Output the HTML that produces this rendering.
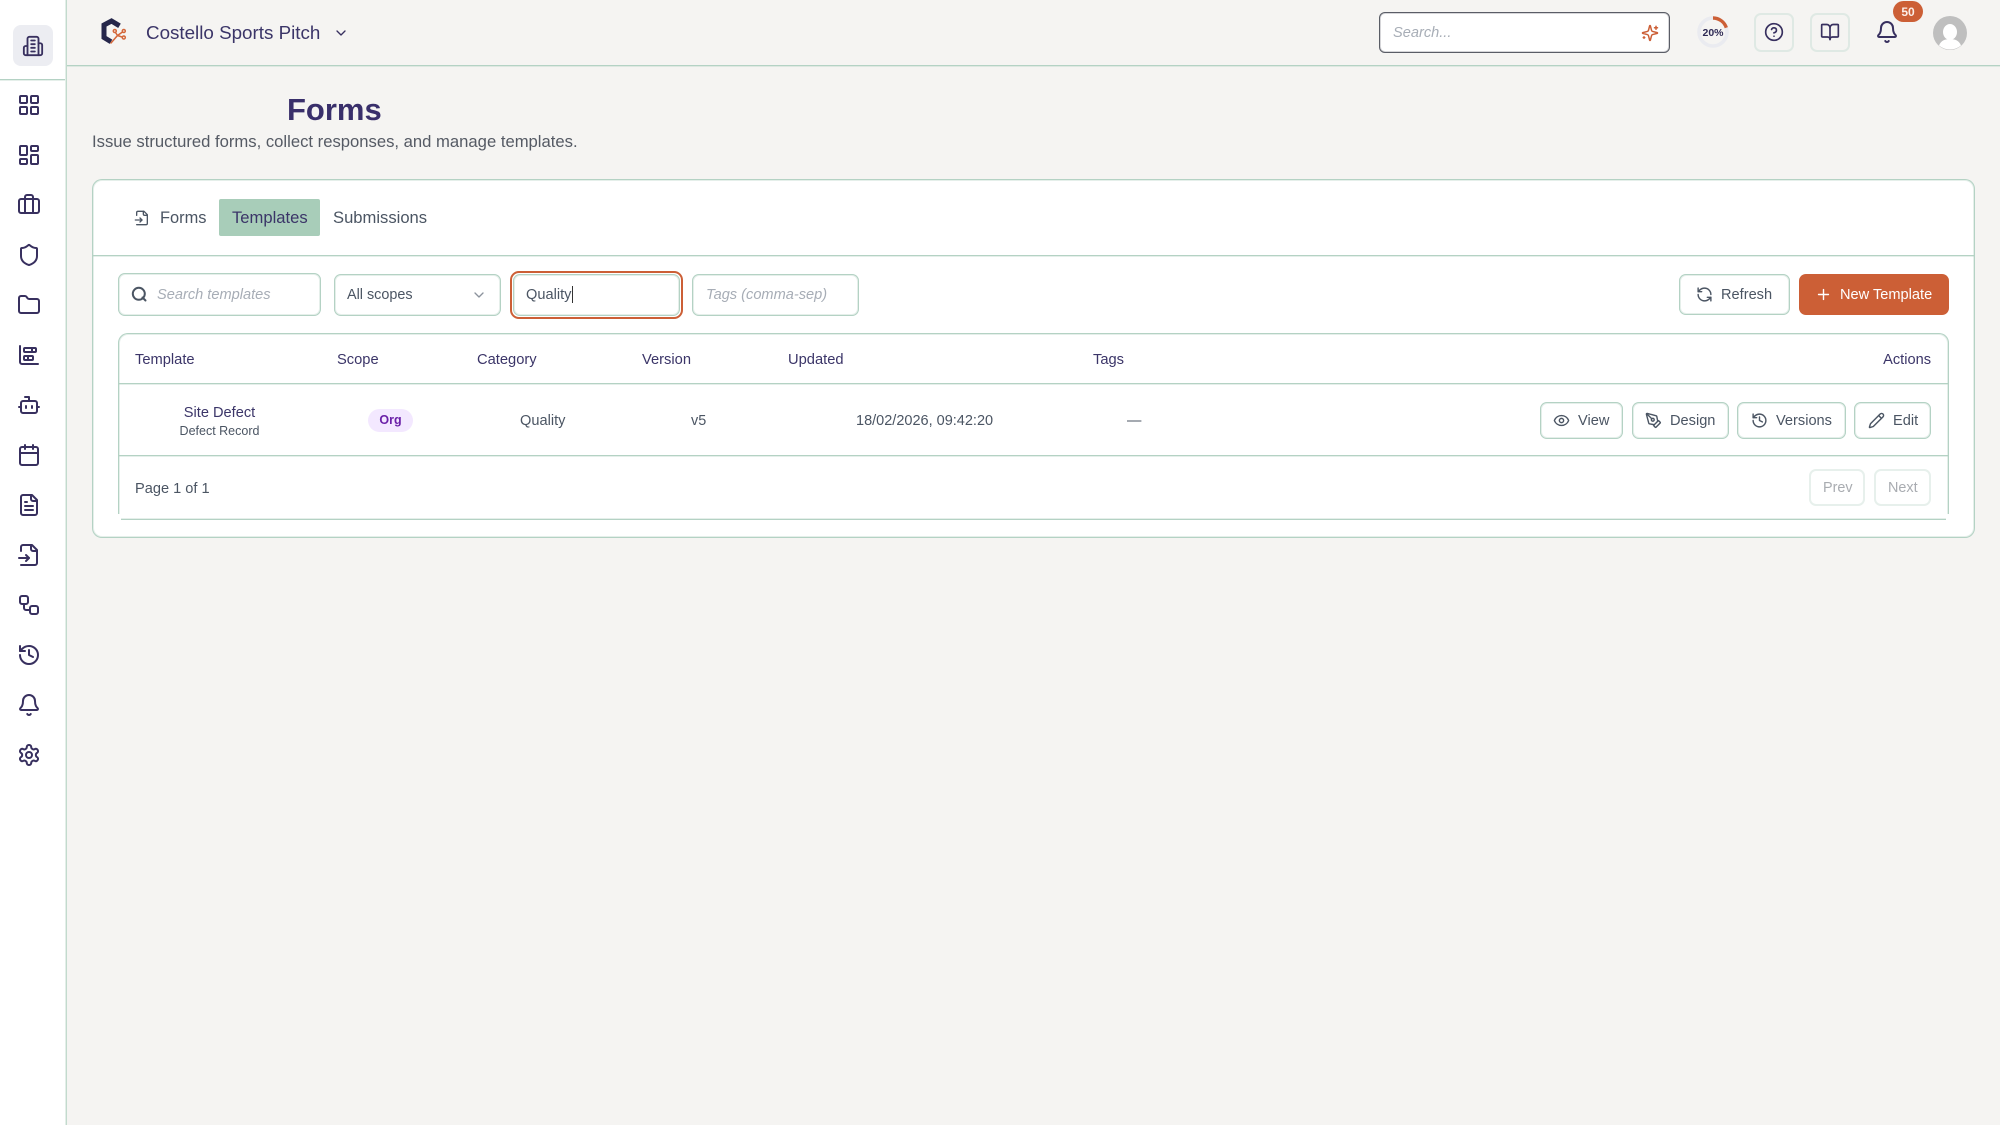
<!DOCTYPE html>
<html><head><meta charset="utf-8"><style>
*{box-sizing:border-box}
html,body{margin:0;padding:0;width:2000px;height:1125px;overflow:hidden;background:#f5f4f2;font-family:"Liberation Sans",Arial,sans-serif}
.a{position:absolute}
.t{position:absolute;white-space:nowrap;line-height:20px;height:20px;color:#4b5563;font-size:14.4px}
.ti{color:#3b3568}
.b{position:absolute;background:#fff;border-radius:7px;box-shadow:inset 0 0 0 1px #b4d2c4,inset 0 0 0 2px rgba(180,210,196,.35)}
.h{position:absolute;height:2px;border-top:1px solid #b4d2c4;background:rgba(180,210,196,.35)}
svg{position:absolute;fill:none;stroke:currentColor;stroke-width:2;stroke-linecap:round;stroke-linejoin:round;overflow:visible}
.n{color:#38305f;left:17px;width:24px;height:24px}
.g{color:#4b5563;width:16px;height:16px}
</style></head><body>
<svg width="0" height="0" style="display:none"><defs>
<symbol id="grid" viewBox="0 0 24 24"><rect x="3" y="3" width="7" height="7" rx="1"/><rect x="14" y="3" width="7" height="7" rx="1"/><rect x="14" y="14" width="7" height="7" rx="1"/><rect x="3" y="14" width="7" height="7" rx="1"/></symbol>
<symbol id="filein" viewBox="0 0 24 24"><path d="M4 22h14a2 2 0 0 0 2-2V7l-5-5H6a2 2 0 0 0-2 2v4"/><path d="M14 2v4a2 2 0 0 0 2 2h4"/><path d="M2 15h10"/><path d="m9 18 3-3-3-3"/></symbol>
<symbol id="hist" viewBox="0 0 24 24"><path d="M3 12a9 9 0 1 0 9-9 9.75 9.75 0 0 0-6.74 2.74L3 8"/><path d="M3 3v5h5"/><path d="M12 7v5l4 2"/></symbol>
<symbol id="bell" viewBox="0 0 24 24"><path d="M10.268 21a2 2 0 0 0 3.464 0"/><path d="M3.262 15.326A1 1 0 0 0 4 17h16a1 1 0 0 0 .74-1.673C19.41 13.956 18 12.499 18 8A6 6 0 0 0 6 8c0 4.499-1.411 5.956-2.738 7.326"/></symbol>
</defs></svg>

<!-- sidebar -->
<div class="a" style="left:0;top:0;width:67px;height:1125px;background:#fff;box-shadow:inset -1px 0 0 #c2dacd,inset -2px 0 0 rgba(194,218,205,.45)"></div>
<div class="h" style="left:0;top:79px;width:65px"></div>
<div class="a" style="left:13px;top:25px;width:40px;height:41px;background:#ecedf2;border-radius:8px"></div>
<svg class="n" style="left:22px;top:35px;width:22px;height:22px" viewBox="0 0 24 24"><path d="M6 22V4a2 2 0 0 1 2-2h8a2 2 0 0 1 2 2v18Z"/><path d="M6 12H4a2 2 0 0 0-2 2v6a2 2 0 0 0 2 2h2"/><path d="M18 9h2a2 2 0 0 1 2 2v9a2 2 0 0 1-2 2h-2"/><path d="M10 6h4M10 10h4M10 14h4M10 18h4"/></svg>
<svg class="n" style="top:93px"><use href="#grid"/></svg>
<svg class="n" style="top:143px" viewBox="0 0 24 24"><rect x="3" y="3" width="7" height="9" rx="1"/><rect x="14" y="3" width="7" height="5" rx="1"/><rect x="14" y="12" width="7" height="9" rx="1"/><rect x="3" y="16" width="7" height="5" rx="1"/></svg>
<svg class="n" style="top:193px" viewBox="0 0 24 24"><path d="M16 20V4a2 2 0 0 0-2-2h-4a2 2 0 0 0-2 2v16"/><rect x="2" y="6" width="20" height="14" rx="2"/></svg>
<svg class="n" style="top:243px" viewBox="0 0 24 24"><path d="M20 13c0 5-3.5 7.5-7.66 8.95a1 1 0 0 1-.67-.01C7.5 20.5 4 18 4 13V6a1 1 0 0 1 1-1c2 0 4.5-1.2 6.24-2.72a1.17 1.17 0 0 1 1.52 0C14.51 3.81 17 5 19 5a1 1 0 0 1 1 1z"/></svg>
<svg class="n" style="top:293px" viewBox="0 0 24 24"><path d="M20 20a2 2 0 0 0 2-2V8a2 2 0 0 0-2-2h-7.9a2 2 0 0 1-1.69-.9L9.6 3.9A2 2 0 0 0 7.93 3H4a2 2 0 0 0-2 2v13a2 2 0 0 0 2 2Z"/></svg>
<svg class="n" style="top:343px" viewBox="0 0 24 24"><path d="M11 13v4"/><path d="M15 5v4"/><path d="M3 3v16a2 2 0 0 0 2 2h16"/><rect x="7" y="13" width="9" height="4" rx="1"/><rect x="7" y="5" width="12" height="4" rx="1"/></svg>
<svg class="n" style="top:393px" viewBox="0 0 24 24"><path d="M12 8V4H8"/><rect x="4" y="8" width="16" height="12" rx="2"/><path d="M2 14h2M20 14h2M15 13v2M9 13v2"/></svg>
<svg class="n" style="top:443px" viewBox="0 0 24 24"><path d="M8 2v4M16 2v4"/><rect x="3" y="4" width="18" height="18" rx="2"/><path d="M3 10h18"/></svg>
<svg class="n" style="top:493px" viewBox="0 0 24 24"><path d="M15 2H6a2 2 0 0 0-2 2v16a2 2 0 0 0 2 2h12a2 2 0 0 0 2-2V7Z"/><path d="M14 2v4a2 2 0 0 0 2 2h4"/><path d="M10 9H8M16 13H8M16 17H8"/></svg>
<svg class="n" style="top:543px"><use href="#filein"/></svg>
<svg class="n" style="top:593px" viewBox="0 0 24 24"><rect x="3" y="3" width="8" height="8" rx="2"/><path d="M7 11v4a2 2 0 0 0 2 2h4"/><rect x="13" y="13" width="8" height="8" rx="2"/></svg>
<svg class="n" style="top:643px"><use href="#hist"/></svg>
<svg class="n" style="top:693px"><use href="#bell"/></svg>
<svg class="n" style="top:743px" viewBox="0 0 24 24"><path d="M12.22 2h-.44a2 2 0 0 0-2 2v.18a2 2 0 0 1-1 1.73l-.43.25a2 2 0 0 1-2 0l-.15-.08a2 2 0 0 0-2.73.73l-.22.38a2 2 0 0 0 .73 2.73l.15.1a2 2 0 0 1 1 1.72v.51a2 2 0 0 1-1 1.74l-.15.09a2 2 0 0 0-.73 2.73l.22.38a2 2 0 0 0 2.73.73l.15-.08a2 2 0 0 1 2 0l.43.25a2 2 0 0 1 1 1.73V20a2 2 0 0 0 2 2h.44a2 2 0 0 0 2-2v-.18a2 2 0 0 1 1-1.73l.43-.25a2 2 0 0 1 2 0l.15.08a2 2 0 0 0 2.73-.73l.22-.39a2 2 0 0 0-.73-2.73l-.15-.08a2 2 0 0 1-1-1.74v-.5a2 2 0 0 1 1-1.74l.15-.09a2 2 0 0 0 .73-2.73l-.22-.38a2 2 0 0 0-2.73-.73l-.15.08a2 2 0 0 1-2 0l-.43-.25a2 2 0 0 1-1-1.73V4a2 2 0 0 0-2-2z"/><circle cx="12" cy="12" r="3"/></svg>

<!-- top bar -->
<div class="h" style="left:67px;top:65px;width:1933px"></div>
<svg class="a" style="left:96px;top:14px;width:36px;height:36px" viewBox="0 0 36 36"><path stroke="#25264a" stroke-width="5" stroke-linecap="butt" stroke-linejoin="miter" d="M23.5 11.800 15.500 7 8 11V23.500L15 27.800"/><g stroke="#d4673a" stroke-width="1.5"><path d="M15 29 21.500 21.500 19.500 18.500M21.500 21.500 26.500 18M21.500 21.500 26 23"/><circle cx="18.800" cy="17" r="1.500"/><circle cx="27.800" cy="17" r="1.500"/><circle cx="27.800" cy="23.500" r="1.500"/></g></svg>
<div class="t ti" style="left:146px;top:23px;font-size:18.8px">Costello Sports Pitch</div>
<svg class="a" style="left:333px;top:25px;width:16px;height:16px;color:#38305f" viewBox="0 0 24 24"><path d="m6 9 6 6 6-6"/></svg>

<div class="b" style="left:1379px;top:12px;width:291px;height:41px;box-shadow:inset 0 0 0 1px #5a5d66,inset 0 0 0 2px rgba(90,93,102,.25);border-radius:6px"></div>
<div class="t" style="left:1393px;top:23px;font-style:italic;color:#a7adb6;font-size:14.6px">Search...</div>
<svg class="a" style="left:1641px;top:24px;width:18px;height:18px;color:#cc5f36" viewBox="0 0 24 24"><path d="M9.937 15.5A2 2 0 0 0 8.5 14.063l-6.135-1.582a.5.5 0 0 1 0-.962L8.5 9.936A2 2 0 0 0 9.937 8.5l1.582-6.135a.5.5 0 0 1 .963 0L14.063 8.5A2 2 0 0 0 15.5 9.937l6.135 1.581a.5.5 0 0 1 0 .964L15.5 14.063a2 2 0 0 0-1.437 1.437l-1.582 6.135a.5.5 0 0 1-.963 0z"/><path d="M20 3v4M22 5h-4M4 17v2M5 18H3"/></svg>

<svg class="a" style="left:1697px;top:16px;width:32px;height:32px;stroke:none" viewBox="0 0 32 32"><circle cx="16" cy="16" r="14" fill="#f5f4f2" stroke="#eaebf0" stroke-width="3.6"/><path d="M16 2A14 14 0 0 1 29.3 11.7" fill="none" stroke="#cc5f36" stroke-width="3.4" stroke-linecap="butt"/></svg>
<div class="t ti" style="left:1697px;width:32px;text-align:center;top:23px;font-size:10.5px;font-weight:bold;color:#2f2a55">20%</div>

<div class="a" style="left:1754px;top:13px;width:40px;height:39px;border:2px solid #dfe9e4;border-radius:7px"></div>
<svg class="a" style="left:1764px;top:22px;width:20px;height:20px;color:#38305f" viewBox="0 0 24 24"><circle cx="12" cy="12" r="10"/><path d="M9.09 9a3 3 0 0 1 5.83 1c0 2-3 3-3 3"/><path d="M12 17h.01"/></svg>
<div class="a" style="left:1810px;top:13px;width:40px;height:39px;border:2px solid #dfe9e4;border-radius:7px"></div>
<svg class="a" style="left:1820px;top:22px;width:20px;height:20px;color:#38305f" viewBox="0 0 24 24"><path d="M12 7v14"/><path d="M3 18a1 1 0 0 1-1-1V4a1 1 0 0 1 1-1h5a4 4 0 0 1 4 4 4 4 0 0 1 4-4h5a1 1 0 0 1 1 1v13a1 1 0 0 1-1 1h-6a3 3 0 0 0-3 3 3 3 0 0 0-3-3z"/></svg>
<svg class="a" style="left:1875px;top:20px;width:24px;height:24px;color:#38305f"><use href="#bell"/></svg>
<div class="a" style="left:1893px;top:1px;width:30px;height:21px;background:#cc5f36;border-radius:11px"></div>
<div class="t" style="left:1893px;width:30px;text-align:center;top:2px;font-size:12px;font-weight:bold;color:#fbeee8">50</div>
<svg class="a" style="left:1933px;top:16px;width:34px;height:34px;stroke:none" viewBox="0 0 34 34"><circle cx="17" cy="17" r="17" fill="#bfbfbf"/><ellipse cx="17" cy="16" rx="7" ry="8" fill="#fff"/><path d="M6 29.500c2-5 6-6.500 11-6.500s9 1.500 11 6.500a17 17 0 0 1-22 0Z" fill="#fff"/></svg>

<!-- heading -->
<div class="t" style="left:287px;top:100px;font-size:31px;font-weight:bold;color:#392f6b">Forms</div>
<div class="t" style="left:92px;top:132px;font-size:16.65px;color:#555a64">Issue structured forms, collect responses, and manage templates.</div>

<!-- card -->
<div class="b" style="left:92px;top:179px;width:1883px;height:359px;border-radius:10px"></div>
<div class="h" style="left:93px;top:255px;width:1881px"></div>
<svg class="a" style="left:134px;top:210px;width:16px;height:16px;color:#4b5563"><use href="#filein"/></svg>
<div class="t" style="left:160px;top:208px;font-size:16.4px">Forms</div>
<div class="a" style="left:219px;top:199px;width:101px;height:37px;background:#a8cdb9;border-radius:2px"></div>
<div class="t ti" style="left:232px;top:208px;font-size:16.6px">Templates</div>
<div class="t" style="left:333px;top:208px;font-size:16.6px">Submissions</div>

<!-- filters -->
<div class="b" style="left:118px;top:273px;width:203px;height:43px"></div>
<svg class="a g" style="left:131px;top:286px;width:17px;height:17px"><circle cx="7.8" cy="7.8" r="6"/><path d="m14.500 14.500-3-3"/></svg>
<div class="t" style="left:157px;top:285px;font-style:italic;color:#a7adb6;font-size:14.6px">Search templates</div>
<div class="b" style="left:334px;top:274px;width:167px;height:42px"></div>
<div class="t" style="left:347px;top:285px">All scopes</div>
<svg class="a" style="left:471px;top:287px;width:16px;height:16px;color:#8c939d" viewBox="0 0 24 24"><path d="m6 9 6 6 6-6"/></svg>
<div class="a" style="left:510px;top:271px;width:173px;height:48px;border:2px solid #cc5f36;border-radius:9px;background:#fff"></div>
<div class="b" style="left:513px;top:274px;width:167px;height:42px"></div>
<div class="t" style="left:526px;top:285px;font-size:14.6px">Quality</div>
<div class="a" style="left:572px;top:286px;width:1px;height:17px;background:#333"></div>
<div class="b" style="left:692px;top:274px;width:167px;height:42px"></div>
<div class="t" style="left:706px;top:285px;font-style:italic;color:#a7adb6;font-size:14.6px">Tags (comma-sep)</div>

<div class="b" style="left:1679px;top:274px;width:111px;height:41px"></div>
<svg class="a g" style="left:1696px;top:286px;width:17px;height:17px" viewBox="0 0 24 24"><path d="M21 12a9 9 0 0 0-9-9 9.75 9.75 0 0 0-6.74 2.74L3 8"/><path d="M3 3v5h5"/><path d="M3 12a9 9 0 0 0 9 9 9.75 9.75 0 0 0 6.74-2.74L21 16"/><path d="M16 16h5v5"/></svg>
<div class="t" style="left:1721px;top:285px;font-size:14.6px">Refresh</div>
<div class="a" style="left:1799px;top:274px;width:150px;height:41px;background:#cc5f36;border-radius:7px"></div>
<svg class="a" style="left:1815px;top:286px;width:17px;height:17px;color:#fff" viewBox="0 0 24 24"><path d="M5 12h14M12 5v14"/></svg>
<div class="t" style="left:1840px;top:285px;color:#fff;font-size:14.6px">New Template</div>

<!-- table -->
<div class="b" style="left:118px;top:333px;width:1831px;height:187px;border-radius:10px 10px 0 0"></div>
<div class="a" style="left:114px;top:514px;width:7px;height:8px;background:#fff"></div>
<div class="a" style="left:1946px;top:514px;width:7px;height:8px;background:#fff"></div>
<div class="h" style="left:119px;top:383px;width:1829px"></div>
<div class="h" style="left:119px;top:455px;width:1829px"></div>
<div class="t ti" style="left:135px;top:350px;font-size:14.7px">Template</div>
<div class="t ti" style="left:337px;top:350px;font-size:14.7px">Scope</div>
<div class="t ti" style="left:477px;top:350px;font-size:14.7px">Category</div>
<div class="t ti" style="left:642px;top:350px;font-size:14.7px">Version</div>
<div class="t ti" style="left:788px;top:350px;font-size:14.7px">Updated</div>
<div class="t ti" style="left:1093px;top:350px;font-size:14.7px">Tags</div>
<div class="t ti" style="right:69px;top:350px;font-size:14.6px">Actions</div>

<div class="t ti" style="left:119px;width:201px;text-align:center;top:403px;font-size:14.6px">Site Defect</div>
<div class="t" style="left:119px;width:201px;text-align:center;top:421px;font-size:12.5px">Defect Record</div>
<div class="a" style="left:368px;top:409px;width:45px;height:23px;background:#f3e8ff;border-radius:12px"></div>
<div class="t" style="left:368px;width:45px;text-align:center;top:410px;font-size:12.5px;font-weight:bold;color:#6b21a8">Org</div>
<div class="t" style="left:520px;top:411px;font-size:14.6px">Quality</div>
<div class="t" style="left:691px;top:411px">v5</div>
<div class="t" style="left:856px;top:411px;font-size:14.5px">18/02/2026, 09:42:20</div>
<div class="t" style="left:1127px;top:411px">—</div>

<div class="b" style="left:1540px;top:402px;width:83px;height:37px"></div>
<svg class="a g" style="left:1553px;top:412px;width:17px;height:17px" viewBox="0 0 24 24"><path d="M2.062 12.348a1 1 0 0 1 0-.696 10.75 10.75 0 0 1 19.876 0 1 1 0 0 1 0 .696 10.75 10.75 0 0 1-19.876 0"/><circle cx="12" cy="12" r="3"/></svg>
<div class="t" style="left:1578px;top:411px;font-size:14.6px">View</div>
<div class="b" style="left:1632px;top:402px;width:97px;height:37px"></div>
<svg class="a g" style="left:1645px;top:412px;width:17px;height:17px" viewBox="0 0 24 24"><path d="M15.707 21.293a1 1 0 0 1-1.414 0l-1.586-1.586a1 1 0 0 1 0-1.414l5.586-5.586a1 1 0 0 1 1.414 0l1.586 1.586a1 1 0 0 1 0 1.414z"/><path d="m18 13-1.375-6.874a1 1 0 0 0-.746-.776L3.235 2.028a1 1 0 0 0-1.207 1.207L5.35 15.879a1 1 0 0 0 .776.746L13 18"/><path d="m2.3 2.3 7.286 7.286"/><circle cx="11" cy="11" r="2"/></svg>
<div class="t" style="left:1670px;top:411px;font-size:14.6px">Design</div>
<div class="b" style="left:1737px;top:402px;width:109px;height:37px"></div>
<svg class="a g" style="left:1751px;top:412px;width:17px;height:17px"><use href="#hist"/></svg>
<div class="t" style="left:1776px;top:411px;font-size:14.6px">Versions</div>
<div class="b" style="left:1854px;top:402px;width:77px;height:37px"></div>
<svg class="a g" style="left:1868px;top:412px;width:17px;height:17px" viewBox="0 0 24 24"><path d="M21.174 6.812a1 1 0 0 0-3.986-3.987L3.842 16.174a2 2 0 0 0-.5.83l-1.321 4.352a.5.5 0 0 0 .623.622l4.353-1.32a2 2 0 0 0 .83-.497z"/><path d="m15 5 4 4"/></svg>
<div class="t" style="left:1893px;top:411px;font-size:14.6px">Edit</div>

<div class="t" style="left:135px;top:479px;font-size:14.6px">Page 1 of 1</div>
<div class="a" style="left:1809px;top:469px;width:56px;height:37px;border:2px solid #e7f0ec;border-radius:7px"></div>
<div class="t" style="left:1823px;top:478px;color:#a9acb1;font-size:14.4px">Prev</div>
<div class="a" style="left:1874px;top:469px;width:57px;height:37px;border:2px solid #e7f0ec;border-radius:7px"></div>
<div class="t" style="left:1888px;top:478px;color:#a9acb1;font-size:14.4px">Next</div>
</body></html>
